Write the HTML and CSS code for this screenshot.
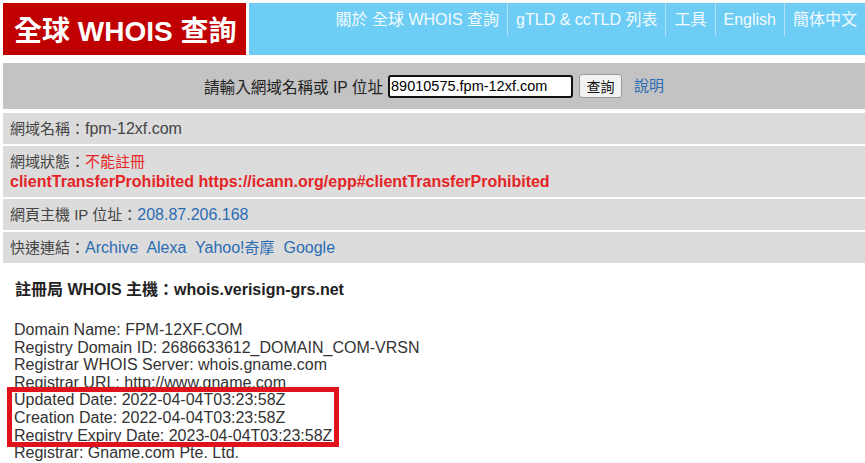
FILE: index.html
```html
<!DOCTYPE html>
<html lang="zh-Hant">
<head>
<meta charset="utf-8">
<title>全球 WHOIS 查詢</title>
<link rel="stylesheet" href="styles.css">
</head>
<body>
<div class="page">
  <header class="top">
    <div class="logo">全球 WHOIS 查詢</div>
    <nav class="nav">
      <a class="nav-link" href="#">關於 全球 WHOIS 查詢</a>
      <a class="nav-link" href="#">gTLD &amp; ccTLD 列表</a>
      <a class="nav-link" href="#">工具</a>
      <a class="nav-link" href="#">English</a>
      <a class="nav-link" href="#">簡体中文</a>
    </nav>
  </header>

  <form class="search">
    <label class="search-label" for="q">請輸入網域名稱或 IP 位址</label>
    <input class="search-input" id="q" type="text" value="89010575.fpm-12xf.com">
    <button class="search-btn" type="button">查詢</button>
    <a class="link help" href="#">說明</a>
  </form>

  <div class="rows">
    <div class="row"><span class="cjk">網域名稱：</span>fpm-12xf.com</div>
    <div class="row"><span class="cjk">網域狀態：</span><span class="red cjk">不能註冊</span><br><b class="red">clientTransferProhibited https://icann.org/epp#clientTransferProhibited</b></div>
    <div class="row"><span class="cjk">網頁主機 IP 位址：</span><a class="link" href="#">208.87.206.168</a></div>
    <div class="row"><span class="cjk">快速連結：</span><a class="link" href="#">Archive</a>&nbsp; <a class="link" href="#">Alexa</a>&nbsp; <a class="link" href="#">Yahoo!<span class="cjk">奇摩</span></a>&nbsp; <a class="link" href="#">Google</a></div>
  </div>

  <section class="whois">
    <h2 class="whois-title">註冊局 WHOIS 主機：whois.verisign-grs.net</h2>
    <pre class="whois-text">Domain Name: FPM-12XF.COM
Registry Domain ID: 2686633612_DOMAIN_COM-VRSN
Registrar WHOIS Server: whois.gname.com
Registrar URL: http://www.gname.com
Updated Date: 2022-04-04T03:23:58Z
Creation Date: 2022-04-04T03:23:58Z
Registry Expiry Date: 2023-04-04T03:23:58Z
Registrar: Gname.com Pte. Ltd.</pre>
    <div class="mark"></div>
  </section>
</div>
</body>
</html>
```

FILE: styles.css
```css
html, body {
  margin: 0;
  padding: 0;
  background: #fff;
}
body {
  font-family: "Liberation Sans", Arial, "Noto Sans CJK TC", sans-serif;
  color: #333;
  overflow: hidden;
}
.page {
  padding: 3px 0 0 3px;
}
.top {
  display: flex;
  gap: 3px;
  height: 52px;
}
.logo {
  width: 243px;
  box-sizing: border-box;
  background: #c00000;
  color: #fff;
  font-weight: bold;
  font-size: 28px;
  display: flex;
  align-items: center;
  padding-left: 11px;
  white-space: nowrap;
}
.nav {
  flex: 1;
  background: #6dcdf5;
  display: flex;
  justify-content: flex-end;
  align-items: flex-start;
}
.nav-link {
  color: #f4fbff;
  text-decoration: none;
  font-size: 16px;
  line-height: 19px;
  padding: 7px 8px;
  white-space: nowrap;
}
.nav-link + .nav-link {
  border-left: 1px solid rgba(255, 255, 255, 0.45);
}
.search {
  margin: 8px 0 0;
  height: 46px;
  background: #c3c3c3;
  display: flex;
  align-items: center;
  justify-content: center;
  font-size: 14px;
  color: #222;
}
.search-label {
  margin-right: 5px;
  font-size: 15.6px;
}
.search-input {
  width: 185px;
  height: 23px;
  box-sizing: border-box;
  border: 2px solid #111;
  border-radius: 3px;
  padding: 0 1px;
  font-family: "Liberation Sans", Arial, sans-serif;
  font-size: 14.5px;
  color: #000;
  outline: none;
  margin: 0 6px 0 0;
}
.search-btn {
  height: 24px;
  width: 43px;
  box-sizing: border-box;
  border: 1px solid #9a9a9a;
  border-radius: 3px;
  background: #f2f2f2;
  font-family: "Liberation Sans", Arial, "Noto Sans CJK TC", sans-serif;
  font-size: 14px;
  color: #111;
  padding: 0;
  margin-right: 12px;
}
.link {
  color: #2b6cb3;
  text-decoration: none;
}
.help {
  font-size: 15px;
  margin-bottom: 4px;
}
.rows {
  margin-top: 4px;
  display: flex;
  flex-direction: column;
  gap: 2px;
}
.row {
  background: #dcdcdc;
  padding: 6px 7px 5px;
  font-size: 16px;
  line-height: 20px;
  color: #444;
}
.cjk {
  font-size: 15px;
}
.red {
  color: #e52426;
}
b.red {
  font-size: 16px;
}
.whois {
  position: relative;
  padding-left: 11px;
}
.whois-title {
  margin: 17px 0 0;
  font-size: 16px;
  line-height: 20px;
  font-weight: bold;
  color: #222;
  padding-left: 1px;
}
.whois-text {
  margin: 21px 0 0;
  font-family: "Liberation Sans", Arial, sans-serif;
  font-size: 16px;
  line-height: 17.6px;
  color: #333;
}
.mark {
  position: absolute;
  left: 4px;
  top: 107px;
  width: 332px;
  height: 60px;
  box-sizing: border-box;
  border: 5px solid #e0131d;
}
```
